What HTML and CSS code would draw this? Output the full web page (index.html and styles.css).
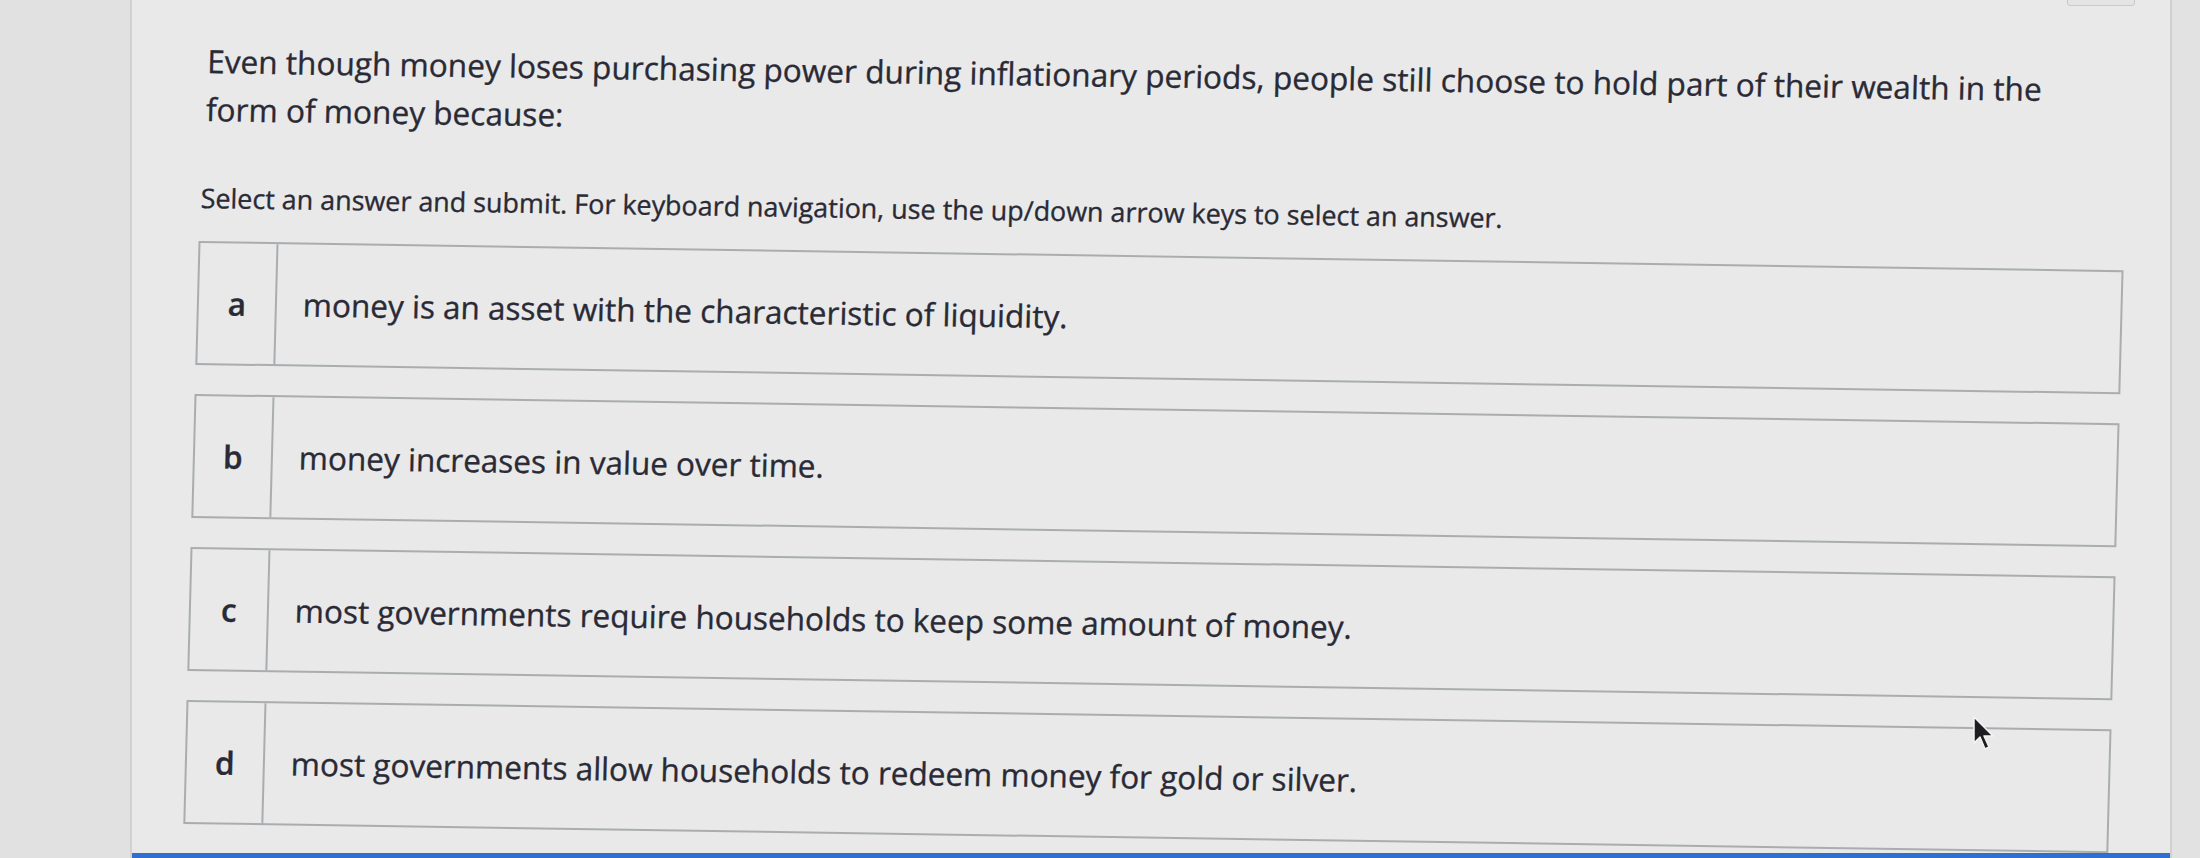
FILE: index.html
```html
<!DOCTYPE html>
<html lang="en">
<head>
<meta charset="utf-8">
<title>Question</title>
<link rel="stylesheet" href="styles.css">
</head>
<body>
<div class="screen">
  <div class="gutter-left"></div>
  <main class="panel">
    <div class="top-tab"></div>
    <div class="content">
      <p class="question">Even though money loses purchasing power during inflationary periods, people still choose to hold part of their wealth in the form of money because:</p>
      <p class="hint">Select an answer and submit. For keyboard navigation, use the up/down arrow keys to select an answer.</p>
      <div class="options">
        <div class="option"><span class="letter">a</span><span class="text">money is an asset with the characteristic of liquidity.</span></div>
        <div class="option"><span class="letter">b</span><span class="text">money increases in value over time.</span></div>
        <div class="option"><span class="letter">c</span><span class="text">most governments require households to keep some amount of money.</span></div>
        <div class="option"><span class="letter">d</span><span class="text">most governments allow households to redeem money for gold or silver.</span></div>
      </div>
    </div>
    <div class="bottom-bar"></div>
    <svg class="cursor" width="24" height="36" viewBox="0 0 24 36"><path d="M2 1 L2 27 L8 21 L13 33 L17 31 L12 20 L21 20 Z" fill="#1e1e22" stroke="#f4f4f4" stroke-width="1.5" stroke-linejoin="round"/></svg>
  </main>
  <div class="gutter-right"></div>
</div>
</body>
</html>
```
FILE: styles.css
```css
html, body {
  margin: 0;
  padding: 0;
}
body {
  width: 2200px;
  height: 858px;
  overflow: hidden;
  background: #dfe0df;
  font-family: "Open Sans", "Noto Sans", sans-serif;
  color: #2a2936;
}
.screen {
  display: flex;
  height: 858px;
}
.gutter-left {
  width: 130px;
  flex: none;
  background: #e0e1e0;
}
.gutter-right {
  flex: 1;
  background: #e1e2e1;
}
.panel {
  position: relative;
  width: 2038px;
  flex: none;
  background: #e8e9e8;
  border-left: 2px solid #d0d1d0;
  border-right: 2px solid #cfd0cf;
  display: flex;
  flex-direction: column;
}
.content {
  flex: 1;
  padding-left: 65px;
  transform: skew(-1.5deg, 0.87deg);
  transform-origin: 68px 300px;
  -webkit-text-stroke: 0.35px currentColor;
}
.question {
  margin: 37px 0 0 4px;
  font-size: 31.6px;
  line-height: 48px;
  width: 1865px;
}
.hint {
  margin: 49px 0 0 1px;
  font-size: 26.9px;
  line-height: 32px;
}
.options {
  margin-top: 27px;
  width: 1925px;
  display: flex;
  flex-direction: column;
  gap: 29px;
}
.option {
  height: 124px;
  box-sizing: border-box;
  border: 2px solid #aaadb0;
  display: grid;
  grid-template-columns: 78px 1fr;
  align-items: stretch;
}
.letter {
  border-right: 2px solid #aaadb0;
  display: flex;
  align-items: center;
  justify-content: center;
  font-size: 31.5px;
  font-weight: 600;
  line-height: 38px;
}
.text {
  display: flex;
  align-items: center;
  padding-left: 26px;
  font-size: 31.5px;
  line-height: 38px;
}
.bottom-bar {
  position: absolute;
  left: 0;
  right: 0;
  bottom: 0;
  height: 5px;
  background: #2f6fd0;
}
.top-tab {
  position: absolute;
  left: 1935px;
  top: -6px;
  width: 66px;
  height: 10px;
  border: 1px solid #c9cac9;
  border-radius: 3px;
  background: #e3e4e3;
}
.cursor {
  position: absolute;
  left: 1840px;
  top: 716px;
}
```
